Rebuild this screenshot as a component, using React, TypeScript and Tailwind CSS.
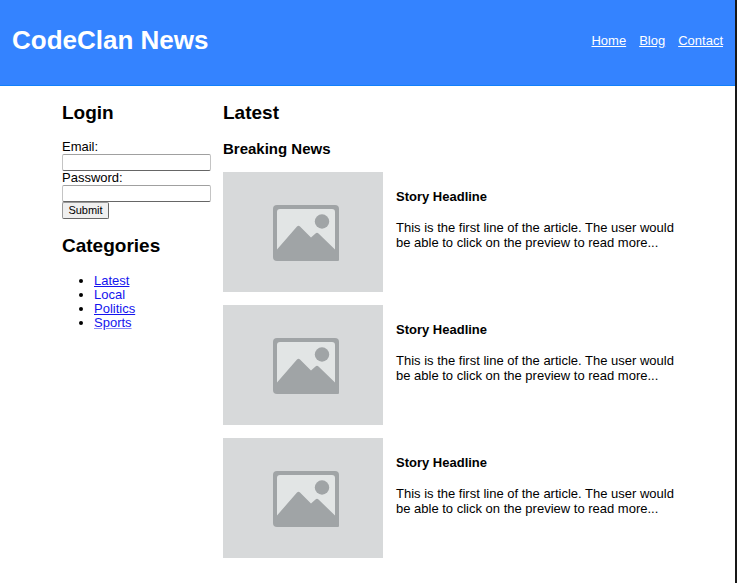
import React from "react";

const navLinks = ["Home", "Blog", "Contact"];

const categories = [
  { name: "Latest", style: "underline" },
  { name: "Local", style: "no-underline" },
  { name: "Politics", style: "underline" },
  { name: "Sports", style: "underline decoration-[#8a8af8]" },
];

const stories = [1, 2, 3];

function Placeholder() {
  return (
    <svg
      role="img"
      aria-label="Story image"
      viewBox="0 0 160 120"
      className="h-[120px] w-40 shrink-0 bg-[#d7d9da]"
    >
      <path d="M54 33H112a4 4 0 0 1 4 4V88a1 1 0 0 1-1 1H54a4 4 0 0 1-4-4V37a4 4 0 0 1 4-4Z" fill="#a0a4a6" />
      <path d="M54 40a3 3 0 0 1 3-3H109a3 3 0 0 1 3 3V77.500L95.500 61.500Q94 60 92.500 61.500L88 65.500L77 54.500Q75.500 53 74 54.500L54 77.500Z" fill="#e2e5e5" />
      <circle cx="99" cy="49.500" r="7.200" fill="#a0a4a6" />
    </svg>
  );
}

function Field({ id, label, type }: { id: string; label: string; type: string }) {
  return (
    <>
      <label htmlFor={id} className="block leading-[14px]">
        {label}
      </label>
      <input
        id={id}
        type={type}
        className="block h-[17px] w-full rounded-xs border border-[#c4c4c4] border-t-[#a0a0a0] border-b-[#666] bg-white px-1 text-[11px] outline-none"
      />
    </>
  );
}

function Story() {
  return (
    <article className="flex gap-[13px]">
      <Placeholder />
      <div className="pt-[17px]">
        <h4 className="font-bold">Story Headline</h4>
        <p className="mt-4">
          This is the first line of the article. The user would be able to click on the preview to
          read more...
        </p>
      </div>
    </article>
  );
}

export default function App() {
  return (
    <div className="min-h-screen border-r-2 border-[#181818] bg-white font-['Liberation_Sans',Arial,sans-serif] text-[13px] leading-[15px] text-black">
      <header className="flex items-center justify-between border-b border-[#1280fa] bg-[#3483ff] px-3 pt-6 pb-[29px] text-white">
        <h1 className="text-[26px] leading-8 font-bold">CodeClan News</h1>
        <nav className="flex gap-[13px]">
          {navLinks.map((name) => (
            <a key={name} href="#" className="underline">
              {name}
            </a>
          ))}
        </nav>
      </header>
      <div className="flex gap-3 pt-4 pr-14 pl-[62px]">
        <aside className="w-[149px] shrink-0">
          <h2 className="text-[19px] leading-[22px] font-bold">Login</h2>
          <form className="mt-4" onSubmit={(e) => e.preventDefault()}>
            <Field id="email" label="Email:" type="email" />
            <Field id="password" label="Password:" type="password" />
            <button
              type="submit"
              className="block h-[17px] w-[47px] rounded-xs border border-[#999] border-r-[#666] border-b-[#666] bg-[#efefef] text-[11px] leading-[15px]"
            >
              Submit
            </button>
          </form>
          <h2 className="mt-4 text-[19px] leading-[22px] font-bold">Categories</h2>
          <ul className="mt-[17px] list-disc pl-8">
            {categories.map((c) => (
              <li key={c.name} className="leading-[14px]">
                <a href="#" className={`text-[#1414ee] ${c.style}`}>
                  {c.name}
                </a>
              </li>
            ))}
          </ul>
        </aside>
        <main className="min-w-0 flex-1">
          <h2 className="text-[19px] leading-[22px] font-bold">Latest</h2>
          <h3 className="mt-4 text-[15px] leading-[18px] font-bold">Breaking News</h3>
          <div className="mt-[14px] flex flex-col gap-[13px]">
            {stories.map((n) => (
              <Story key={n} />
            ))}
          </div>
        </main>
      </div>
    </div>
  );
}
